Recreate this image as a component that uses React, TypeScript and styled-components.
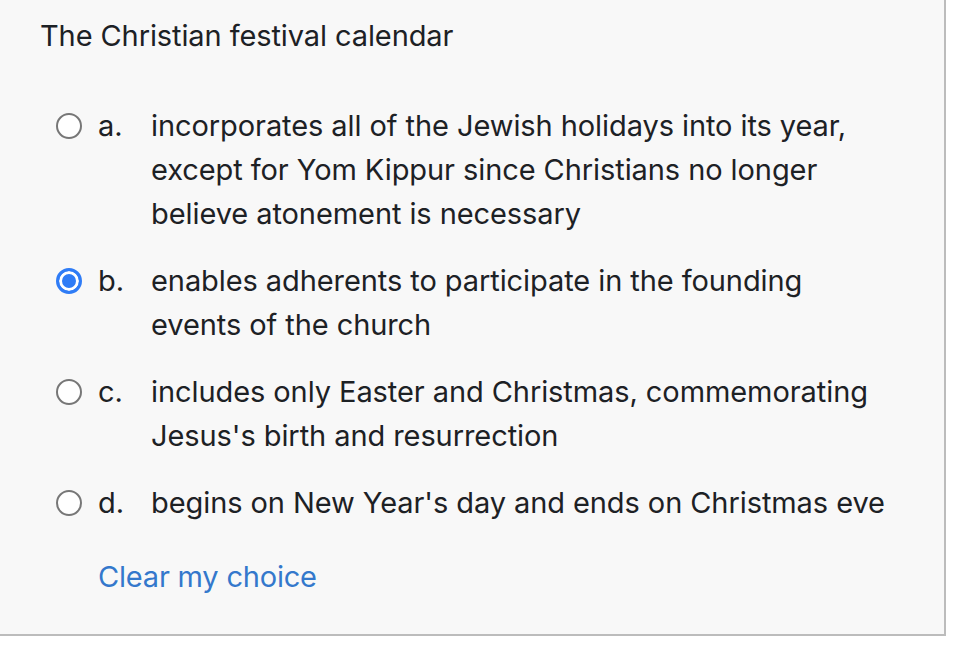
import styled, { createGlobalStyle } from "styled-components";

const GlobalStyle = createGlobalStyle`
  html, body {
    margin: 0;
    padding: 0;
    background: #ffffff;
  }
  body {
    font-family: Inter, "Noto Sans", "Liberation Sans", sans-serif;
    color: #1d2125;
  }
`

type OptionType = {
    letter: string
    text: string[]
    checked?: boolean
}

const options: OptionType[] = [
    {
        letter: 'a.',
        text: [
            'incorporates all of the Jewish holidays into its year,',
            'except for Yom Kippur since Christians no longer',
            'believe atonement is necessary',
        ],
    },
    {
        letter: 'b.',
        text: ['enables adherents to participate in the founding', 'events of the church'],
        checked: true,
    },
    {
        letter: 'c.',
        text: ['includes only Easter and Christmas, commemorating', "Jesus's birth and resurrection"],
    },
    {
        letter: 'd.',
        text: ["begins on New Year's day and ends on Christmas eve"],
    },
]

const App = () => {
    return (
        <>
            <GlobalStyle/>
            <Panel>
                <Question>The Christian festival calendar</Question>
                <Answers>
                    {options.map(o => (
                        <Option key={o.letter}>
                            <Radio $checked={!!o.checked}/>
                            <Letter>{o.letter}</Letter>
                            <OptionText>
                                {o.text.map(line => <Line key={line}>{line}</Line>)}
                            </OptionText>
                        </Option>
                    ))}
                </Answers>
                <ClearLink href="#">Clear my choice</ClearLink>
            </Panel>
        </>
    )
}

export default App

const Panel = styled.div`
  box-sizing: border-box;
  width: 946px;
  height: 636px;
  background-color: #f8f8f8;
  border-right: 2px solid #bcbcbc;
  border-bottom: 2px solid #bcbcbc;
  padding: 14px 0 0 40px;
  font-size: 29px;
  line-height: 44px;
`

const Question = styled.div`
  letter-spacing: -0.1px;
  margin-bottom: 46px;
`

const Answers = styled.div`
  display: flex;
  flex-direction: column;
  gap: 23px;
  padding-left: 16px;
`

const Option = styled.div`
  display: flex;
  align-items: flex-start;
`

const Radio = styled.span<{ $checked: boolean }>`
  box-sizing: border-box;
  flex: none;
  width: 26px;
  height: 26px;
  margin-top: 9px;
  margin-right: 16px;
  border-radius: 50%;
  background-color: ${p => p.$checked ? '#2f7cf6' : '#ffffff'};
  border: ${p => p.$checked ? '3px solid #2f7cf6' : '2px solid #777777'};
  box-shadow: ${p => p.$checked ? 'inset 0 0 0 3px #ffffff' : 'none'};
`

const Letter = styled.span`
  flex: none;
  width: 53px;
`

const OptionText = styled.div`
  display: flex;
  flex-direction: column;
  letter-spacing: -0.08px;
`

const Line = styled.span`
  white-space: nowrap;
`

const ClearLink = styled.a`
  display: inline-block;
  margin-top: 30px;
  margin-left: 58px;
  color: #3478cc;
  text-decoration: none;
  letter-spacing: -0.2px;
`
